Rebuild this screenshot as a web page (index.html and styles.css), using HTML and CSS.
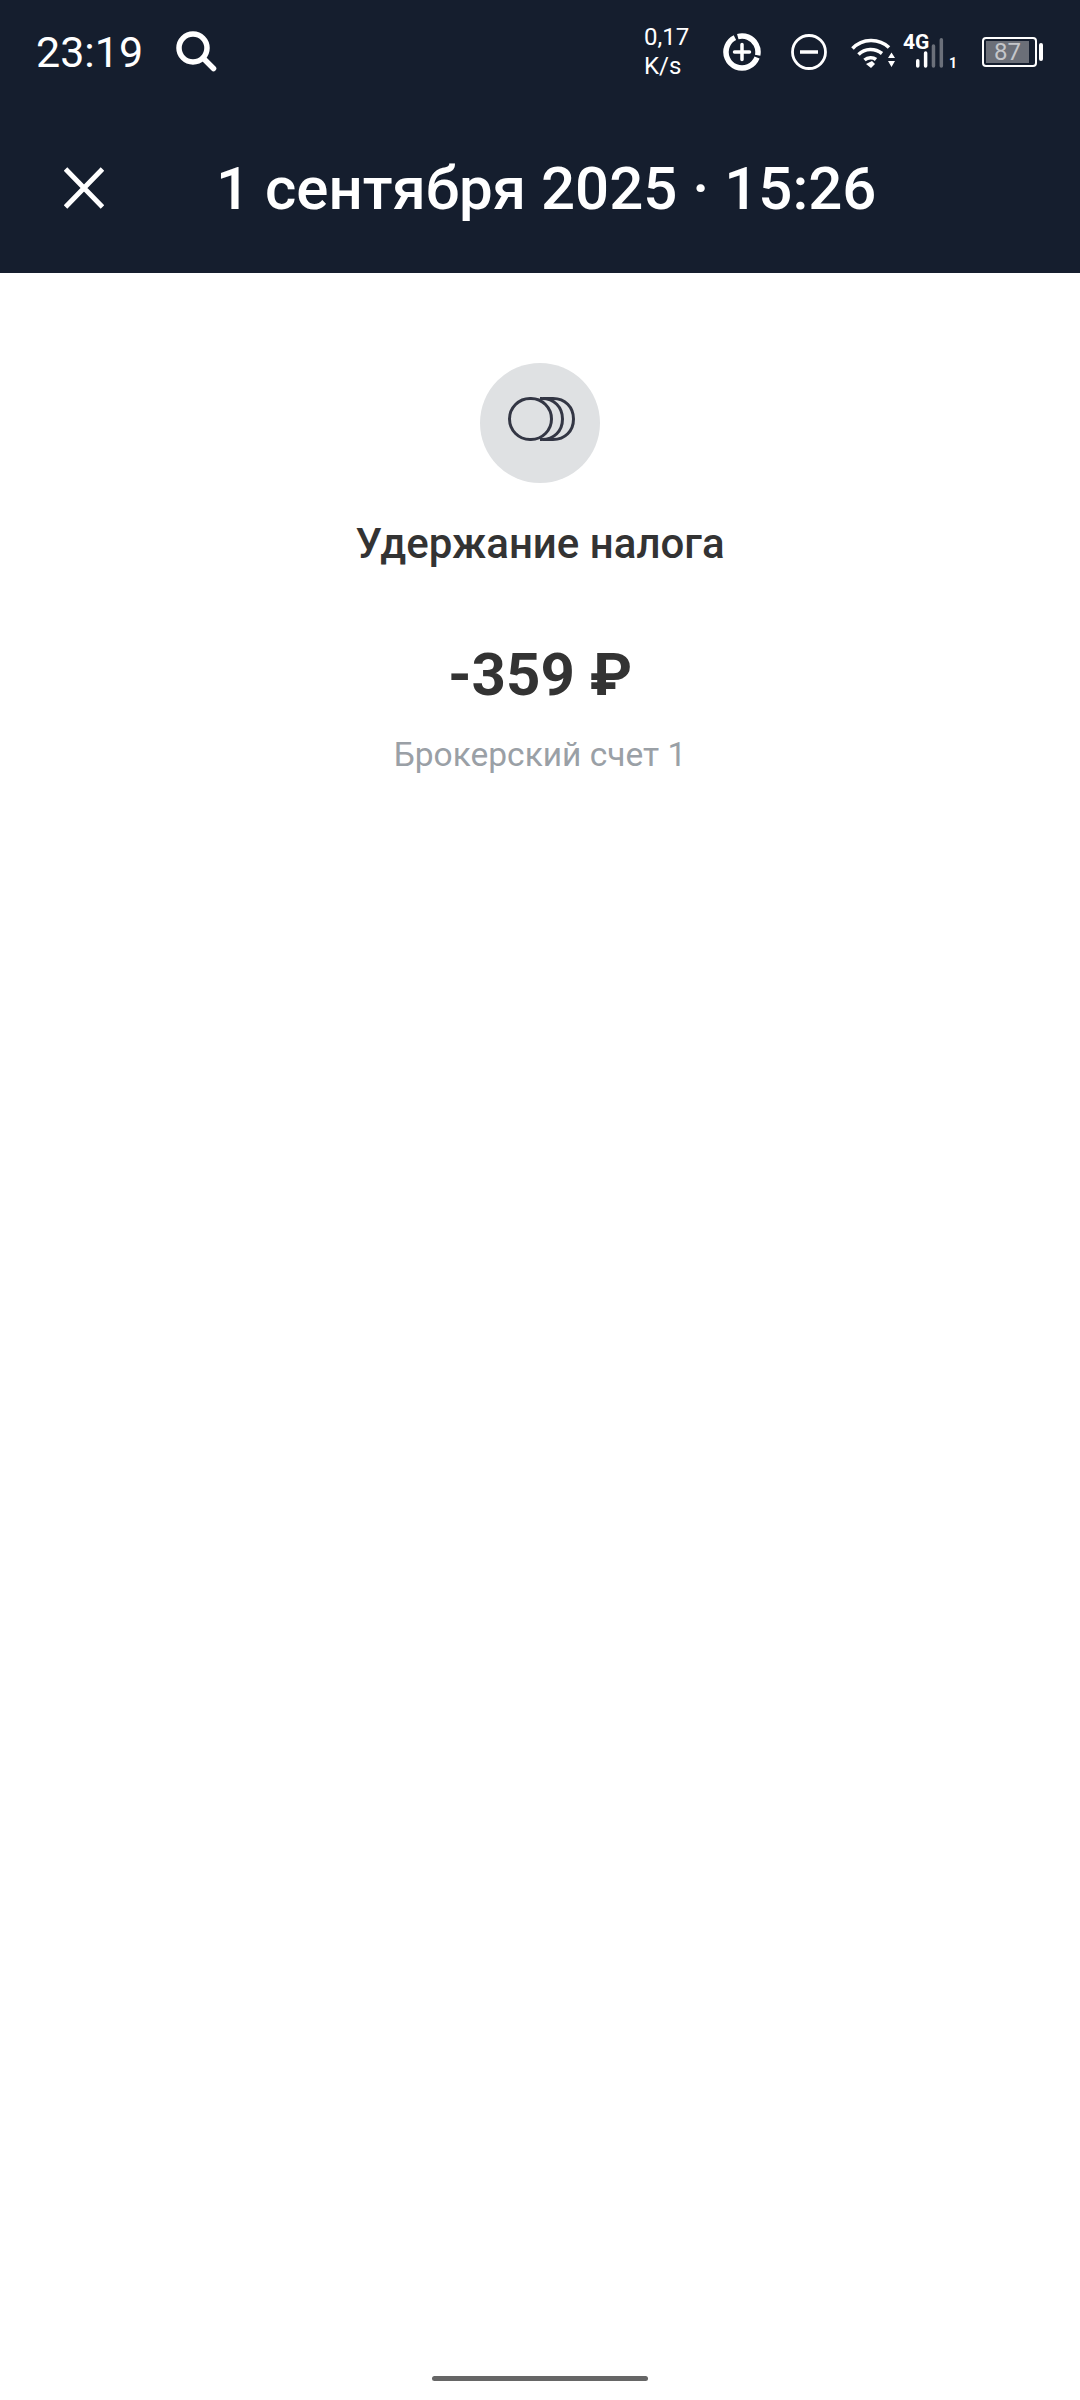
FILE: index.html
```html
<!DOCTYPE html>
<html lang="ru">
<head>
    <meta charset="UTF-8">
    <meta name="viewport" content="width=device-width, initial-scale=1.0">
    <title>Удержание налога</title>
    <link rel="stylesheet" href="styles.css">
</head>
<body>
    <header class="header">
        <div class="status-bar">
            <div class="status-left">
                <span class="clock">23:19</span>
                <svg class="search-icon" width="42" height="42" viewBox="0 0 42 42" fill="none" stroke="#fff" stroke-width="5.500" stroke-linecap="round">
                    <circle cx="18" cy="18" r="14"></circle>
                    <path d="M28.500 28.500L38.500 38.500"></path>
                </svg>
            </div>
            <div class="status-right">
                <div class="net-speed">0,17<br>K/s</div>
                <svg class="ring-icon" width="38" height="38" viewBox="0 0 38 38" fill="none" stroke="#fff">
                    <circle cx="19" cy="19" r="16" stroke-width="5.500" stroke-dasharray="22 2.500 62 3 11 0" transform="rotate(-68 19 19)"></circle>
                    <path d="M19 11.500V26.500M11.500 19H26.500" stroke-width="3.500" stroke-linecap="round"></path>
                </svg>
                <svg class="minus-icon" width="36" height="36" viewBox="0 0 36 36" fill="none" stroke="#fff">
                    <circle cx="18" cy="18" r="16.500" stroke-width="2.800"></circle>
                    <path d="M9 18H27" stroke-width="3.500"></path>
                </svg>
                <svg class="wifi-icon" width="44" height="31" viewBox="0 0 44 31">
                    <g fill="none" stroke="#fff" stroke-width="3.600">
                        <path d="M1.500 11.500C11.500 1 28 1 38 10.500"></path>
                        <path d="M7.500 17.500C14 11 24 11 31 16.500"></path>
                        <path d="M13.500 23C17 20 22 20 25 22.500"></path>
                    </g>
                    <path d="M15 27L21 24L24 27L20 31Z" fill="#fff"></path>
                    <path d="M37 21L40.500 15.500L44 21ZM37 24H44L40.500 30Z" fill="#fff"></path>
                </svg>
                <div class="cell-signal">
                    <span class="cell-type">4G</span>
                    <svg class="cell-bars" width="32" height="35" viewBox="0 0 32 35">
                        <rect x="0" y="25" width="4" height="10" rx="2" fill="#fff"></rect>
                        <rect x="9" y="16" width="4" height="19" rx="2" fill="#fff"></rect>
                        <rect x="18" y="8" width="4" height="27" rx="2" fill="#6b707a"></rect>
                        <rect x="27" y="1" width="4" height="34" rx="2" fill="#6b707a"></rect>
                    </svg>
                    <span class="cell-slot">1</span>
                </div>
                <div class="battery">
                    <div class="battery-body">
                        <div class="battery-fill">87</div>
                    </div>
                    <div class="battery-tip"></div>
                </div>
            </div>
        </div>
        <div class="toolbar">
            <svg class="close-icon" width="40" height="42" viewBox="0 0 40 42" fill="none" stroke="#fff" stroke-width="5">
                <path d="M1.500 2L38.500 40M38.500 2L1.500 40"></path>
            </svg>
            <h1 class="toolbar-title">1 сентября 2025 · 15:26</h1>
        </div>
    </header>

    <main class="content">
        <div class="op-icon">
            <svg width="68" height="46" viewBox="0 0 68 46" fill="none" stroke="#333644" stroke-width="3">
                <path d="M36 2.500H46C58 2.500 66.500 11 66.500 23C66.500 35 58 43.500 46 43.500H36"></path>
                <path d="M33 2.500H35C47 2.500 55.500 11 55.500 23C55.500 35 47 43.500 35 43.500H33"></path>
                <rect x="2.500" y="2.500" width="42" height="41" rx="20.500"></rect>
            </svg>
        </div>
        <div class="op-name">Удержание налога</div>
        <div class="op-amount">-359 ₽</div>
        <div class="op-account">Брокерский счет 1</div>
    </main>

    <div class="home-indicator"></div>
</body>
</html>
```

FILE: styles.css
```css
* {
    box-sizing: border-box;
}

body {
    margin: 0;
    height: 2400px;
    display: flex;
    flex-direction: column;
    background-color: #fff;
    font-family: Roboto, "Noto Sans", sans-serif;
}

.header {
    height: 273px;
    background-color: #151e2e;
    color: #fff;
}

.status-bar {
    height: 104px;
    display: flex;
    justify-content: space-between;
    align-items: center;
    padding: 0 37px 0 36px;
}

.status-left {
    display: flex;
    align-items: center;
    gap: 32px;
}

.clock {
    font-size: 43px;
    line-height: 48px;
}

.search-icon {
    margin-top: -2px;
}

.status-right {
    display: flex;
    align-items: center;
}

.net-speed {
    width: 79px;
    font-size: 24px;
    line-height: 29px;
}

.minus-icon {
    margin-left: 30px;
}

.wifi-icon {
    margin-left: 24px;
}

.cell-signal {
    position: relative;
    width: 54px;
    height: 36px;
    margin-left: 8px;
    display: flex;
    align-items: flex-end;
    padding-left: 13px;
}

.cell-type {
    position: absolute;
    left: 0;
    top: -2px;
    font-size: 21px;
    line-height: 20px;
    font-weight: 700;
}

.cell-slot {
    margin-left: 5px;
    font-size: 14px;
    line-height: 14px;
    font-weight: 700;
}

.battery {
    display: flex;
    align-items: center;
    gap: 2px;
    margin-left: 25px;
}

.battery-body {
    width: 55px;
    height: 30px;
    padding: 2px;
    border: 2px solid #fff;
    border-radius: 4px;
}

.battery-fill {
    width: 43px;
    height: 100%;
    background-color: #6b6f78;
    color: #c4c6ca;
    font-size: 24px;
    line-height: 22px;
    text-align: center;
}

.battery-tip {
    width: 4px;
    height: 18px;
    border-radius: 2px;
    background-color: #fff;
}

.toolbar {
    height: 169px;
    display: flex;
    align-items: center;
    padding: 0 0 0 64px;
    gap: 112px;
}

.close-icon {
    margin-top: -1px;
}

.toolbar-title {
    margin: 0;
    font-size: 60px;
    line-height: 70px;
    font-weight: 500;
}

.content {
    flex: 1;
    display: flex;
    flex-direction: column;
    align-items: center;
    padding-top: 90px;
    text-align: center;
}

.op-icon {
    width: 120px;
    height: 120px;
    padding: 0 0 8px 2px;
    display: flex;
    align-items: center;
    justify-content: center;
    border-radius: 50%;
    background-color: #dfe1e3;
}

.op-name {
    margin-top: 38px;
    font-size: 42px;
    line-height: 46px;
    font-weight: 500;
    color: #333;
}

.op-amount {
    margin-top: 73px;
    font-size: 60px;
    line-height: 70px;
    font-weight: 700;
    color: #333;
}

.op-account {
    margin-top: 25px;
    font-size: 33.500px;
    line-height: 40px;
    color: #9aa0a6;
}

.home-indicator {
    width: 216px;
    height: 5px;
    margin: 0 auto 19px;
    border-radius: 3px;
    background-color: #666;
}
```
